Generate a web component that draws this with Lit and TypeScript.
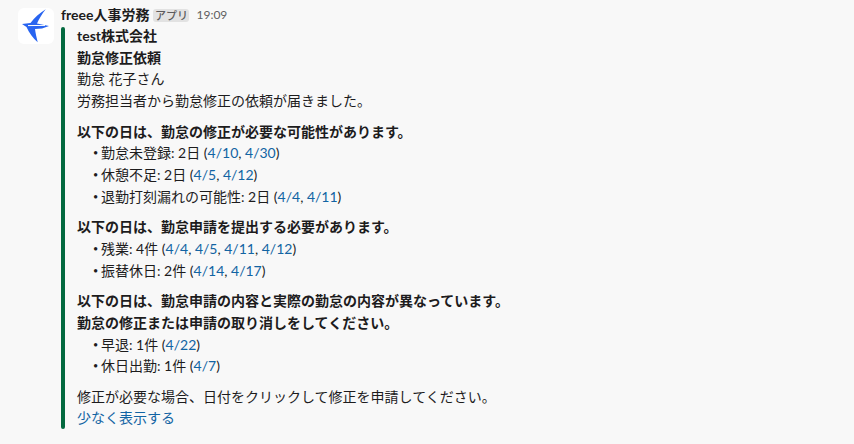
import { LitElement, html, css } from "lit";
import { customElement } from "lit/decorators.js";

const dates = (list: string[]) => html`(${list.map((d, i) => html`${i ? ", " : ""}<a>${d}</a>`)})`;

@customElement("app-root")
export class AppRoot extends LitElement {
  static styles = css`
    :host {
      display: block;
      width: 854px;
      height: 444px;
      overflow: hidden;
      background: #f8f8f8;
      color: #1d1c1d;
      font-family: Lato, "Noto Sans CJK JP", sans-serif;
      font-size: 14px;
      line-height: 21.7px;
    }
    .msg { display: flex; gap: 7px; padding: 7px 0 0 18px; }
    .avatar { width: 36px; height: 36px; border-radius: 6px; background: #fff; flex: none; margin-top: 1px; }
    .avatar svg { display: block; }
    .body { display: flex; flex-direction: column; }
    .head { display: flex; align-items: center; height: 16px; }
    .name { font-weight: 700; font-size: 14px; }
    .badge { margin-left: 4px; background: #e2e2e2; color: #5c5b5c; font-size: 11px; font-weight: 500; line-height: 13px; height: 13px; padding: 0 1.5px; border-radius: 3px; }
    .time { margin-left: 7px; color: #616061; font-size: 12px; }
    .att { display: flex; margin-top: 4px; height: 402px; }
    .bar { width: 4px; background: #03693f; border-radius: 2px; flex: none; }
    .text { margin-left: 12px; margin-top: -2px; }
    .text b { font-weight: 700; }
    .gap { margin-top: 8.8px; }
    .li { padding-left: 13px; display: flex; }
    .dot { width: 11px; flex: none; font-size: 9px; text-indent: 3px; }
    a { color: #1264a3; }
  `;

  private li(label: string, d: string[]) {
    return html`<div class="li"><span class="dot">•</span><span>${label} ${dates(d)}</span></div>`;
  }

  render() {
    return html`<div class="msg">
      <div class="avatar">
        <svg width="36" height="36" viewBox="0 0 36 36">
          <path fill="#2864f0" d="M27.7 1.3 C22 5 16 10 12.5 15 L4 16 L8.5 19 C11 25 15 30 19.7 34.3 C18.5 29 17.5 25 17 21 L24 20.5 L31 18 L19 15.5 C21 11 24 6 27.7 1.3 Z"/>
          <path fill="none" stroke="#fff" stroke-width="1" d="M10 17.6 L27 17.4"/>
        </svg>
      </div>
      <div class="body">
        <div class="head">
          <span class="name">freee人事労務</span>
          <span class="badge">アプリ</span>
          <span class="time">19:09</span>
        </div>
        <div class="att">
          <div class="bar"></div>
          <div class="text">
            <div><b>test株式会社</b></div>
            <div><b>勤怠修正依頼</b></div>
            <div>勤怠 花子さん</div>
            <div>労務担当者から勤怠修正の依頼が届きました。</div>
            <div class="gap"><b>以下の日は、勤怠の修正が必要な可能性があります。</b></div>
            ${this.li("勤怠未登録: 2日", ["4/10", "4/30"])}
            ${this.li("休憩不足: 2日", ["4/5", "4/12"])}
            ${this.li("退勤打刻漏れの可能性: 2日", ["4/4", "4/11"])}
            <div class="gap"><b>以下の日は、勤怠申請を提出する必要があります。</b></div>
            ${this.li("残業: 4件", ["4/4", "4/5", "4/11", "4/12"])}
            ${this.li("振替休日: 2件", ["4/14", "4/17"])}
            <div class="gap"><b>以下の日は、勤怠申請の内容と実際の勤怠の内容が異なっています。</b></div>
            <div><b>勤怠の修正または申請の取り消しをしてください。</b></div>
            ${this.li("早退: 1件", ["4/22"])}
            ${this.li("休日出勤: 1件", ["4/7"])}
            <div class="gap">修正が必要な場合、日付をクリックして修正を申請してください。</div>
            <div><a>少なく表示する</a></div>
          </div>
        </div>
      </div>
    </div>`;
  }
}
